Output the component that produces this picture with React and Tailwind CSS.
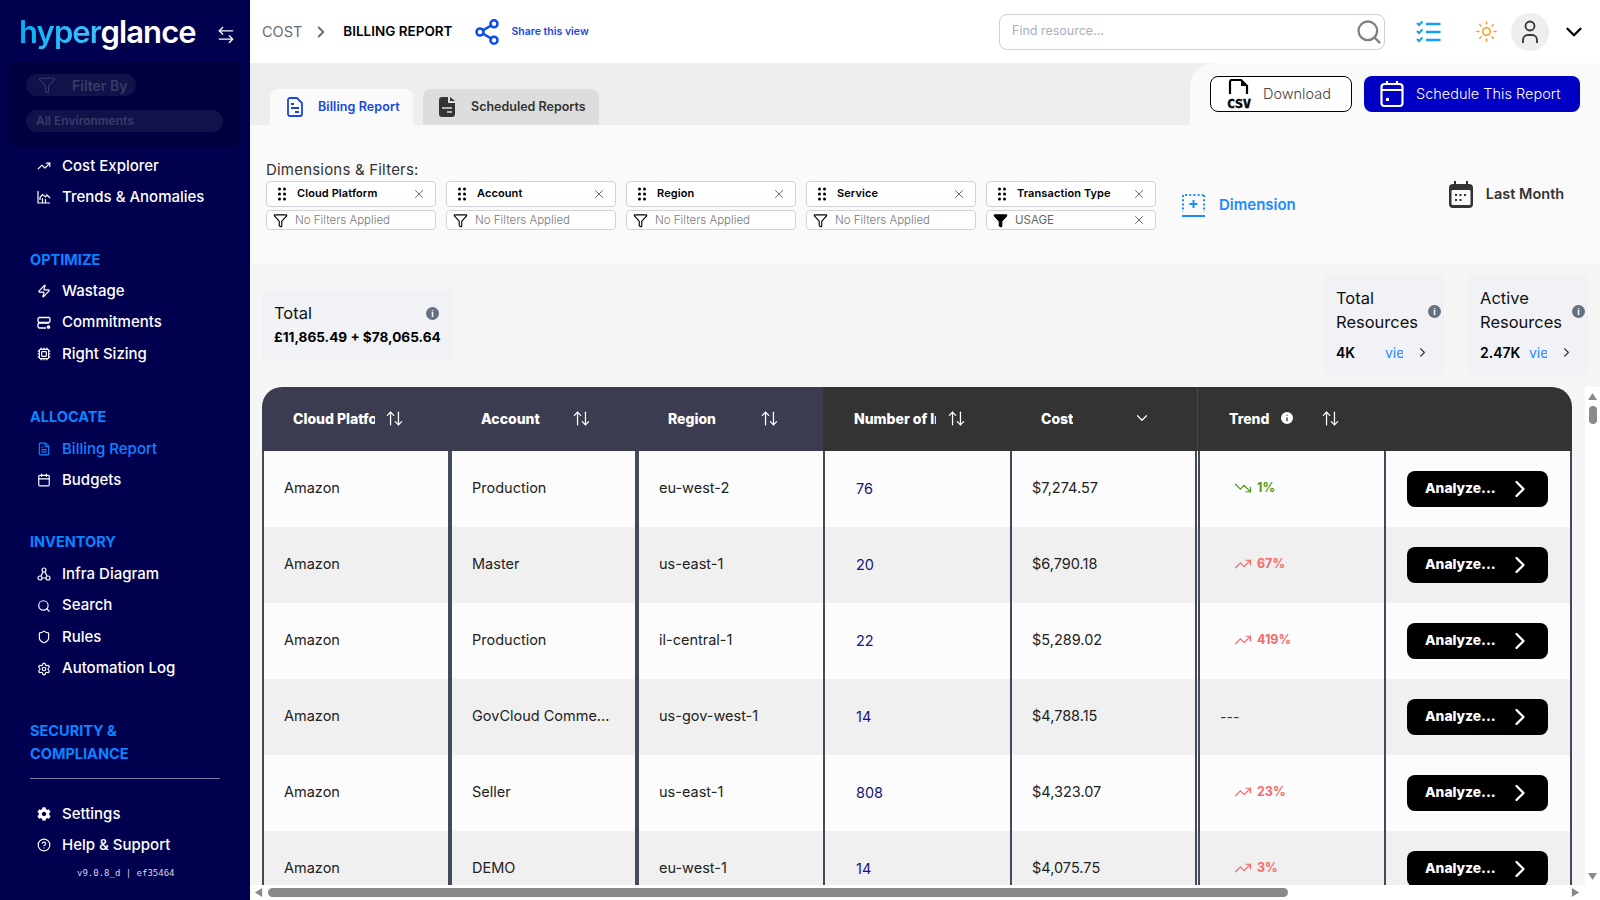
import React from "react";
import {
  ArrowLeftRight,
  ArrowUpDown,
  Calendar,
  ChevronDown,
  ChevronRight,
  CircleHelp,
  Cpu,
  FileText,
  Funnel,
  Info,
  Search,
  Settings,
  Shield,
  Share2,
  Sun,
  TrendingDown,
  TrendingUp,
  X,
  Zap,
} from "lucide-react";
import { FaCog } from "react-icons/fa";

const rows = [
  ["Amazon", "Production", "eu-west-2", "76", "$7,274.57", "1%", "down"],
  ["Amazon", "Master", "us-east-1", "20", "$6,790.18", "67%", "up"],
  ["Amazon", "Production", "il-central-1", "22", "$5,289.02", "419%", "up"],
  ["Amazon", "GovCloud Comme...", "us-gov-west-1", "14", "$4,788.15", "---", "none"],
  ["Amazon", "Seller", "us-east-1", "808", "$4,323.07", "23%", "up"],
  ["Amazon", "DEMO", "eu-west-1", "14", "$4,075.75", "3%", "up"],
];

const chips = [
  ["Cloud Platform", "No Filters Applied"],
  ["Account", "No Filters Applied"],
  ["Region", "No Filters Applied"],
  ["Service", "No Filters Applied"],
  ["Transaction Type", "USAGE"],
];

function TrendsIcon() {
  return (
    <svg width="14" height="14" viewBox="0 0 14 14" fill="none" stroke="currentColor" strokeWidth="1.2">
      <path d="M1 1v12h12" />
      <path d="M3 10V7.5l2.5-3 3 2.5 1.5-2 3 3" />
      <path d="M5.5 13V8M8.5 13V9" />
    </svg>
  );
}

function CommitIcon() {
  return (
    <svg width="14" height="14" viewBox="0 0 14 14" fill="none" stroke="currentColor" strokeWidth="1.3">
      <rect x="1" y="1.5" width="12" height="5" rx="1.5" />
      <path d="M9 12H2.5A1.5 1.5 0 0 1 1 10.5v-2A1.5 1.5 0 0 1 2.5 7H12" />
      <circle cx="11.5" cy="11" r="1.2" fill="currentColor" />
    </svg>
  );
}

function InfraIcon() {
  return (
    <svg width="14" height="14" viewBox="0 0 14 14" fill="none" stroke="currentColor" strokeWidth="1.2">
      <circle cx="7" cy="3" r="2" />
      <circle cx="3" cy="11" r="2" />
      <circle cx="11" cy="11" r="2" />
      <path d="M6 5 4 9M8 5l2 4M5 11h4" />
    </svg>
  );
}

function NavItem({ icon, label, active }) {
  return (
    <div className={`flex h-[31.6px] items-center pl-[37px] text-[15px] font-medium ${active ? "text-[#0a84ff]" : "text-white"}`}>
      <span className="flex w-[25px] shrink-0">{icon}</span>
      {label}
    </div>
  );
}

function SectionTitle({ children }) {
  return <div className="pl-[30px] text-[14.5px] leading-[23px] font-bold text-[#0a84ff]">{children}</div>;
}

function Sidebar() {
  return (
    <aside className="flex h-full w-[250px] shrink-0 flex-col bg-[#00004f]">
      <div className="flex h-[62px] items-center pl-[19px]">
        <span className="mt-[1px] text-[31px] leading-none font-semibold tracking-[-0.9px]">
          <span className="bg-gradient-to-r from-[#00b0f0] to-[#3cc4ff] bg-clip-text text-transparent">hyper</span>
          <span className="text-white">glance</span>
        </span>
        <ArrowLeftRight className="mt-[7px] ml-[20px] text-white" size={20} strokeWidth={1.6} />
      </div>
      <div className="mx-[10px] h-[86px] rounded-lg bg-[#00003f] px-[16px] pt-[12px]">
        <div className="flex h-[22px] w-[110px] items-center gap-[16px] rounded-full bg-[#12124a] pl-[12px] text-[14px] font-semibold text-[#3b3b68]">
          <Funnel size={18} strokeWidth={1.4} />
          Filter By
        </div>
        <div className="mt-[14px] flex h-[22px] w-[197px] items-center rounded-full bg-[#12124a] pl-[10px] text-[12px] font-semibold text-[#3b3b68]">
          All Environments
        </div>
      </div>
      <div className="mt-[2px]">
        <NavItem icon={<TrendingUp size={14} />} label="Cost Explorer" />
        <NavItem icon={<TrendsIcon />} label="Trends & Anomalies" />
      </div>
      <div className="mt-[35px]">
        <SectionTitle>OPTIMIZE</SectionTitle>
        <div className="mt-[4px]">
          <NavItem icon={<Zap size={14} />} label="Wastage" />
          <NavItem icon={<CommitIcon />} label="Commitments" />
          <NavItem icon={<Cpu size={14} />} label="Right Sizing" />
        </div>
      </div>
      <div className="mt-[35px]">
        <SectionTitle>ALLOCATE</SectionTitle>
        <div className="mt-[5px]">
          <NavItem active icon={<FileText size={14} />} label="Billing Report" />
          <NavItem icon={<Calendar size={14} />} label="Budgets" />
        </div>
      </div>
      <div className="mt-[34px]">
        <SectionTitle>INVENTORY</SectionTitle>
        <div className="mt-[5px]">
          <NavItem icon={<InfraIcon />} label="Infra Diagram" />
          <NavItem icon={<Search size={14} />} label="Search" />
          <NavItem icon={<Shield size={14} />} label="Rules" />
          <NavItem icon={<Settings size={14} />} label="Automation Log" />
        </div>
      </div>
      <div className="mt-[34px]">
        <SectionTitle>
          SECURITY &amp;
          <br />
          COMPLIANCE
        </SectionTitle>
        <div className="mx-[30px] mt-[13px] h-px bg-[#7a7aa8]" />
      </div>
      <div className="mt-[20px]">
        <NavItem icon={<FaCog size={14} />} label="Settings" />
        <div className="mt-[-1px]">
          <NavItem icon={<CircleHelp size={14} />} label="Help & Support" />
        </div>
      </div>
      <div className="mt-[6px] pl-[77px] font-['DejaVu_Sans_Mono',monospace] text-[9px] text-[#d5d5e5]">v9.0.8_d | ef35464</div>
    </aside>
  );
}

function TopBar() {
  return (
    <header className="flex h-[63px] shrink-0 items-center bg-white pl-[12px]">
      <span className="text-[14.5px] text-[#666d7a]">COST</span>
      <ChevronRight className="ml-[10px] text-[#666d7a]" size={18} strokeWidth={2.5} />
      <span className="ml-[13px] text-[13.5px] font-semibold text-black">BILLING REPORT</span>
      <Share2 className="ml-[20px] text-[#0b4fe8]" size={28} strokeWidth={2.2} />
      <span className="ml-[11px] text-[10.5px] font-semibold text-[#1a4be0]">Share this view</span>
      <div className="ml-auto flex h-[36px] w-[386px] items-center justify-between rounded-lg border border-[#ccd0da] pr-[1px] pl-[12px]">
        <span className="text-[12.5px] text-[#aab0ba]">Find resource...</span>
        <Search className="text-[#7b8488]" size={28} strokeWidth={2} />
      </div>
      <svg className="ml-[31px] text-[#1a9bff]" width="25" height="22" viewBox="0 0 25 22" fill="none" stroke="currentColor" strokeWidth="2.6">
        <path d="M1 2l2 2 3.5-3.5M1 10l2 2 3.5-3.5M1 18l2 2 3.5-3.5" strokeWidth="2" />
        <path d="M10 3h14.5M10 11h14.5M10 19h14.5" />
      </svg>
      <Sun className="ml-[34px] text-[#f79a2e]" size={23} strokeWidth={1.6} />
      <div className="ml-[13px] flex h-[38px] w-[38px] items-center justify-center rounded-full bg-[#eeeeee]">
        <svg width="18" height="24" viewBox="0 0 18 24" fill="none" stroke="#333" strokeWidth="1.8">
          <circle cx="9" cy="6" r="4.5" />
          <path d="M2 23v-3a5 5 0 0 1 5-5h4a5 5 0 0 1 5 5v3" />
        </svg>
      </div>
      <ChevronDown className="mr-[13px] ml-[12px] text-black" size={26} strokeWidth={2.2} />
    </header>
  );
}

function TabsRow() {
  return (
    <div className="flex h-[62px] shrink-0 justify-between bg-[#eeeeee]">
      <div className="flex items-end gap-[10px] pl-[20px]">
        <div className="flex h-[36px] w-[143px] items-center rounded-t-lg bg-[#fafafa] pl-[17px] text-[12.5px] font-semibold text-[#1846e0]">
          <svg width="16" height="20" viewBox="0 0 16 20" fill="none" stroke="currentColor" strokeWidth="1.8">
            <path d="M3 1h7l5 5v11a2 2 0 0 1-2 2H3a2 2 0 0 1-2-2V3a2 2 0 0 1 2-2z" />
            <path d="M4 7h3M4 11h8M8 15h4" />
          </svg>
          <span className="ml-[15px] pt-[1px] tracking-[0.1px]">Billing Report</span>
        </div>
        <div className="flex h-[36px] w-[176px] items-center rounded-t-lg bg-[#dddddd] pl-[16px] text-[12.5px] font-semibold text-[#333333]">
          <svg width="16" height="20" viewBox="0 0 16 20">
            <path fill="#333" d="M3 0h6v6h7v11a3 3 0 0 1-3 3H3a3 3 0 0 1-3-3V3a3 3 0 0 1 3-3zM11 0l5 4h-5z" />
            <path stroke="#ddd" strokeWidth="1.6" d="M3 11h10M8 15h5" />
          </svg>
          <span className="ml-[16px] pt-[1px]">Scheduled Reports</span>
        </div>
      </div>
      <div className="flex w-[410px] gap-[12px] rounded-tl-[24px] bg-[#fafafa] pt-[13px] pl-[20px]">
        <div className="flex h-[36px] w-[142px] items-center rounded-lg border border-black bg-white pl-[15px] text-[14.5px] font-light text-[#444444]">
          <svg width="26" height="30" viewBox="0 0 26 30">
            <path d="M4 15V3a2 2 0 0 1 2-2h9l6 6v8" fill="none" stroke="#000" strokeWidth="2.2" />
            <path d="M15 1v6h6" fill="#000" />
            <text x="13" y="28.5" textAnchor="middle" fontFamily="DejaVu Sans Mono" fontWeight="700" fontSize="13" stroke="#000" strokeWidth="0.5" textLength="24" lengthAdjust="spacingAndGlyphs">CSV</text>
          </svg>
          <span className="ml-[11px]">Download</span>
        </div>
        <div className="flex h-[36px] w-[216px] items-center rounded-lg bg-[#0000c4] pl-[16px] text-[14.5px] font-light text-white">
          <svg width="24" height="28" viewBox="0 0 24 28" fill="none" stroke="#fff" strokeWidth="2.2">
            <rect x="1.5" y="4" width="21" height="22" rx="3" />
            <path d="M1.5 10h21M7 1v4M17 1v4" />
            <rect x="6" y="18" width="3" height="3" fill="#fff" stroke="none" />
          </svg>
          <span className="ml-[12px]">Schedule This Report</span>
        </div>
      </div>
    </div>
  );
}

function Chip({ name, filter }) {
  const used = filter === "USAGE";
  return (
    <div className="w-[170px]">
      <div className="flex h-[26px] items-center rounded border border-[#d0d3dc] bg-white pl-[11px]">
        <svg width="8" height="14" viewBox="0 0 8 14" fill="#000">
          <circle cx="1.5" cy="2" r="1.5" />
          <circle cx="6.5" cy="2" r="1.5" />
          <circle cx="1.5" cy="7" r="1.5" />
          <circle cx="6.5" cy="7" r="1.5" />
          <circle cx="1.5" cy="12" r="1.5" />
          <circle cx="6.5" cy="12" r="1.5" />
        </svg>
        <span className="ml-[11px] pb-[2px] text-[11px] font-semibold tracking-[0.1px] text-black">{name}</span>
        <X className="mr-[9px] ml-auto text-[#555555]" size={14} strokeWidth={1.5} />
      </div>
      <div className="mt-[3px] flex h-[20px] items-center rounded border border-[#d0d3dc] bg-white pl-[6px]">
        <Funnel size={15} strokeWidth={1.8} className={used ? "fill-black text-black" : "text-black"} />
        <span className={`ml-[7px] pt-[2px] text-[11.5px] ${used ? "text-[#666666]" : "font-light text-[#777777]"}`}>{filter}</span>
        {used && <X className="mr-[9px] ml-auto text-[#555555]" size={14} strokeWidth={1.5} />}
      </div>
    </div>
  );
}

function FiltersPanel() {
  return (
    <section className="h-[139px] shrink-0 bg-[#fafafa] pl-[16px]">
      <div className="pt-[34px] pb-[1px] text-[15px] leading-[21px] tracking-[0.2px] text-[#333333]">Dimensions &amp; Filters:</div>
      <div className="flex">
        <div className="flex gap-[10px]">
          {chips.map(([name, filter]) => (
            <Chip key={name} name={name} filter={filter} />
          ))}
        </div>
        <div className="mt-[13px] ml-[26px] flex h-[22px] items-center text-[15px] font-semibold text-[#1a8cff]">
          <svg width="23" height="23" viewBox="0 0 23 23" fill="none" stroke="currentColor" strokeWidth="2">
            <path d="M1 1v17M22 1v17M3 1h18" strokeDasharray="2 2.2" />
            <path d="M0 22h23M11.5 6v8M7.5 10h8" />
          </svg>
          <span className="ml-[14px]">Dimension</span>
        </div>
        <div className="ml-[153px] flex h-[26px] items-center text-[14.5px] font-semibold text-[#333333]">
          <svg width="24" height="27" viewBox="0 0 24 27">
            <path fill="#333" d="M5 0h2v3h10V0h2v3h1a4 4 0 0 1 4 4v16a4 4 0 0 1-4 4H4a4 4 0 0 1-4-4V7a4 4 0 0 1 4-4h1z" />
            <rect x="2.5" y="9" width="19" height="15" rx="1" fill="#fafafa" />
            <path stroke="#333" strokeWidth="2" strokeDasharray="2 2.5" d="M6 14h12M6 19h8" />
          </svg>
          <span className="ml-[13px]">Last Month</span>
        </div>
      </div>
    </section>
  );
}

function InfoDot({ className }) {
  return (
    <span className={`flex h-[13px] w-[13px] items-center justify-center rounded-full bg-[#667085] text-[9px] leading-none font-bold text-white ${className}`}>
      i
    </span>
  );
}

function ResourceCard({ title, value, valueWidth }) {
  return (
    <div className="relative h-[100px] w-[120px] bg-[#f0f2f6] pt-[11px] pl-[12px]">
      <div className="text-[16.5px] leading-[24px] text-[#111111]">
        {title}
        <br />
        Resources
      </div>
      <InfoDot className="absolute top-[30px] right-[3px]" />
      <div className="mt-[6px] flex h-[24px] items-center">
        <span className={`text-[14px] font-semibold text-black ${valueWidth}`}>{value}</span>
        <span className="w-[18px] overflow-hidden text-[14px] text-[#2a8cff]">view</span>
        <ChevronRight className="ml-[12px] text-[#333333]" size={15} strokeWidth={1.8} />
      </div>
    </div>
  );
}

function StatsRow() {
  return (
    <section className="flex h-[123px] shrink-0 items-start justify-between bg-[#f5f5f5] pl-[12px]">
      <div className="mt-[26px] h-[70px] w-[191px] bg-[#f0f2f6] px-[12px] pt-[11px]">
        <div className="flex items-center justify-between text-[16.5px] leading-[24px] text-[#111111]">
          Total
          <InfoDot className="mr-[2px]" />
        </div>
        <div className="mt-[2px] text-[13.6px] font-bold whitespace-nowrap text-black">£11,865.49 + $78,065.64</div>
      </div>
      <div className="mt-[11px] flex gap-[24px] pr-[12px]">
        <ResourceCard title="Total" value="4K" valueWidth="w-[49px]" />
        <ResourceCard title="Active" value="2.47K" valueWidth="w-[49px]" />
      </div>
    </section>
  );
}

function HeadCell({ label, labelWidth, pad, gap, children }) {
  return (
    <div className={`flex h-full shrink-0 items-center pb-[2px] text-[14px] font-extrabold text-white ${pad}`}>
      <span className={`overflow-hidden whitespace-nowrap ${labelWidth}`}>{label}</span>
      <span className={gap}>{children}</span>
    </div>
  );
}

const sortIcon = <ArrowUpDown size={19} strokeWidth={1.6} />;

function TableHead() {
  return (
    <div className="flex h-[64px] w-[1310px] shrink-0 overflow-hidden rounded-t-[20px]">
      <div className="flex h-full w-[561px] bg-[#3c3c50]">
        <HeadCell label="Cloud Platform" labelWidth="w-[82px]" pad="w-[188px] pl-[31px]" gap="ml-[10px]">{sortIcon}</HeadCell>
        <HeadCell label="Account" labelWidth="w-[60px]" pad="w-[187px] pl-[31px]" gap="ml-[31px]">{sortIcon}</HeadCell>
        <HeadCell label="Region" labelWidth="w-[50px]" pad="w-[186px] pl-[31px]" gap="ml-[42px]">{sortIcon}</HeadCell>
      </div>
      <div className="flex h-full flex-1 bg-[#333333]">
        <HeadCell label="Number of Instances" labelWidth="w-[82px]" pad="w-[187px] pl-[31px]" gap="ml-[11px]">{sortIcon}</HeadCell>
        <HeadCell label="Cost" labelWidth="w-[32px]" pad="w-[187px] pl-[31px]" gap="ml-[60px]">
          <ChevronDown size={18} strokeWidth={1.6} />
        </HeadCell>
        <div className="flex h-full w-[187px] items-center border-l border-[#44445a] pb-[2px] pl-[31px] text-[14px] font-extrabold text-white">
          Trend
          <Info className="ml-[10px] fill-white text-[#333333]" size={16} strokeWidth={2} />
          <span className="ml-[26px]">{sortIcon}</span>
        </div>
      </div>
    </div>
  );
}

function TrendValue({ value, dir }) {
  if (dir === "none") return <span className="ml-[-14px] text-[14px] text-[#333333]">{value}</span>;
  const color = dir === "down" ? "text-[#4c9a10]" : "text-[#f46a6a]";
  return (
    <span className={`flex items-center gap-[5px] text-[12.5px] font-bold ${color}`}>
      {dir === "down" ? <TrendingDown size={18} strokeWidth={1.6} /> : <TrendingUp size={18} strokeWidth={1.6} />}
      {value}
    </span>
  );
}

function TableRow({ row, shaded }) {
  const [platform, account, region, count, cost, trend, dir] = row;
  const cell = "flex h-full shrink-0 items-center border-[#434a5a] text-[14.5px]";
  return (
    <div className={`flex h-[76px] w-[1310px] shrink-0 ${shaded ? "bg-[#f0f0f0]" : "bg-[#fcfcfc]"}`}>
      <div className={`${cell} w-[190px] border-r-4 border-l-2 pb-[2px] pl-[20px] text-[#222222]`}>{platform}</div>
      <div className={`${cell} w-[187px] border-r-4 pb-[2px] pl-[20px] text-[#222222]`}>{account}</div>
      <div className={`${cell} w-[186px] border-r-2 pb-[2px] pl-[20px] text-[#222222]`}>{region}</div>
      <div className={`${cell} w-[187px] border-r-2 pl-[31px] text-[#16167a]`}>{count}</div>
      <div className={`${cell} w-[188px] border-r-[5px] border-double pb-[2px] pl-[20px] text-[#222222]`}>{cost}</div>
      <div className={`${cell} w-[186px] border-r-2 pb-[2px] pl-[34px]`}>
        <TrendValue value={trend} dir={dir} />
      </div>
      <div className={`${cell} w-[186px] border-r-2 pl-[21px]`}>
        <div className="flex h-[36px] w-[141px] items-center justify-between rounded-lg bg-black pr-[20px] pl-[18px] text-[13.8px] font-extrabold text-white">
          <span className="pb-[1px]">Analyze...</span>
          <ChevronRight size={28} strokeWidth={2} className="mr-[-6px]" />
        </div>
      </div>
    </div>
  );
}

function Arrow({ path }) {
  return (
    <svg width="9" height="9" viewBox="0 0 10 10" className="shrink-0">
      <path d={path} fill="#8a8a8a" />
    </svg>
  );
}

function TableArea() {
  return (
    <section className="flex min-h-0 flex-1 bg-[#f5f5f5] pl-[12px]">
      <div className="flex w-[1310px] shrink-0 flex-col overflow-hidden">
        <TableHead />
        {rows.map((row, i) => (
          <TableRow key={i} row={row} shaded={i % 2 === 1} />
        ))}
      </div>
      <div className="ml-[13px] flex w-[15px] shrink-0 flex-col items-center bg-white pt-[5px] pb-[4px]">
        <Arrow path="M5 1l5 8H0z" />
        <div className="mt-[5px] h-[18px] w-[8px] rounded-full bg-[#8a8a8a]" />
        <div className="flex-1" />
        <Arrow path="M5 9L0 1h10z" />
      </div>
    </section>
  );
}

function BottomScroll() {
  return (
    <div className="flex h-[15px] shrink-0 items-center bg-white pl-[4px]">
      <Arrow path="M1 5l8-5v10z" />
      <div className="ml-[5px] h-[9px] w-[1020px] rounded-full bg-[#8a8a8a]" />
      <div className="flex-1" />
      <div className="mr-[20px]">
        <Arrow path="M9 5l-8 5V0z" />
      </div>
    </div>
  );
}

export default function App() {
  return (
    <div className="flex h-[900px] w-[1600px] overflow-hidden bg-white font-['Inter',sans-serif]">
      <Sidebar />
      <main className="flex min-w-0 flex-1 flex-col">
        <TopBar />
        <TabsRow />
        <FiltersPanel />
        <StatsRow />
        <TableArea />
        <BottomScroll />
      </main>
    </div>
  );
}
